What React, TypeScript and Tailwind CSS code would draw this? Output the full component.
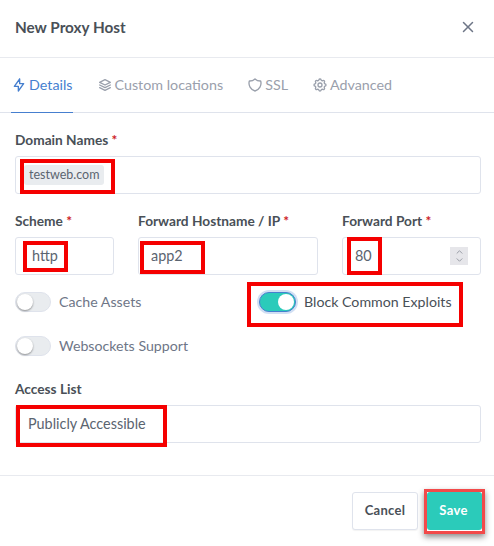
import { TbBolt, TbStack2, TbShield, TbSettings, TbX, TbChevronUp, TbChevronDown } from 'react-icons/tb'
import type { ReactNode } from 'react'

const redBox = 'absolute border-[4px] border-[#f50000] pointer-events-none'

function Label({ text, required }: { text: string; required?: boolean }) {
  return (
    <div className="h-[16px] mb-[8px] text-[13.7px] leading-[16px] font-bold text-[#495057]">
      {text}
      {required && <span className="text-[#cd201f]"> *</span>}
    </div>
  )
}

function Field({ children, className }: { children: ReactNode; className?: string }) {
  return (
    <div className={`relative h-[38px] border border-[#dfe3ec] rounded-[3px] bg-white flex items-center text-[14.4px] text-[#5b6470] ${className ?? ''}`}>
      {children}
    </div>
  )
}

function Toggle({ on, label }: { on?: boolean; label: string }) {
  return (
    <div className="flex items-center gap-[8px] h-[20px]">
      {on ? (
        <div className="w-[37px] h-[20px] rounded-full bg-[#2bcbba] border border-[#467fcf] shadow-[0_0_0_2px_rgba(70,127,207,0.25)] flex items-center justify-end pr-[1px]">
          <div className="w-[16px] h-[16px] rounded-full bg-white" />
        </div>
      ) : (
        <div className="w-[36px] h-[20px] rounded-full bg-[#e9ecef] border border-[#dfe3ec] flex items-center pl-[1px]">
          <div className="w-[16px] h-[16px] rounded-full bg-white shadow-[0_1px_2px_rgba(0,0,0,0.4)]" />
        </div>
      )}
      <span className={`text-[14.2px] leading-[20px] ${on ? 'text-[#495057]' : 'text-[#6e7687]'}`}>{label}</span>
    </div>
  )
}

function Tab({ icon, label, active }: { icon: ReactNode; label: string; active?: boolean }) {
  return (
    <div className={`h-[55px] -mb-px pb-[1px] flex items-center gap-[2px] border-b text-[14.3px] ${active ? 'text-[#467fcf] border-[#467fcf]' : 'text-[#9aa0ac] border-transparent'}`}>
      {icon}
      <span>{label}</span>
    </div>
  )
}

export default function App() {
  return (
    <div className="min-h-screen w-[494px] bg-white font-['Lato','Noto_Sans',sans-serif] overflow-hidden">
      {/* header */}
      <div className="h-[58px] border-b border-[#e8eaef] pl-[15px] pr-[17px] pb-[3px] flex items-center justify-between">
        <h1 className="text-[15.3px] font-bold text-[#495057]">New Proxy Host</h1>
        <TbX size={18} className="text-[#6e7687]" />
      </div>

      {/* tabs */}
      <div className="h-[55px] border-b border-[#dfe3ec] pl-[11px] flex gap-[24px]">
        <Tab active icon={<TbBolt size={16} />} label="Details" />
        <Tab icon={<TbStack2 size={16} />} label="Custom locations" />
        <Tab icon={<TbShield size={16} />} label="SSL" />
        <Tab icon={<TbSettings size={16} />} label="Advanced" />
      </div>

      <div className="pt-[19px] pl-[15px] pr-[13px]">
        <Label text="Domain Names" required />
        <Field className="pl-[8px]">
          <span className="h-[20px] px-[5px] rounded-[3px] bg-[#e9ecef] text-[12.5px] leading-[20px]">testweb.com</span>
          <div className={`${redBox} left-[4px] top-[2px] w-[95px] h-[35px]`} />
        </Field>

        <div className="mt-[19px] flex gap-[24px]">
          <div className="w-[99px]">
            <Label text="Scheme" required />
            <Field className="pl-[16px]">
              http
              <div className={`${redBox} left-[7px] top-[3px] w-[45px] h-[31px]`} />
            </Field>
          </div>
          <div className="w-[180px]">
            <Label text="Forward Hostname / IP" required />
            <Field className="pl-[12px]">
              app2
              <div className={`${redBox} left-[1px] top-[3px] w-[65px] h-[33px]`} />
            </Field>
          </div>
          <div className="w-[139px]">
            <Label text="Forward Port" required />
            <Field className="pl-[12px] pr-[12px] justify-between">
              80
              <div className="w-[18px] h-[18px] bg-[#e6e6ea] flex flex-col items-center justify-center text-[#8a8f99]">
                <TbChevronUp size={11} strokeWidth={2} className="-mb-[1px]" />
                <TbChevronDown size={11} strokeWidth={2} className="-mt-[1px]" />
              </div>
              <div className={`${redBox} left-[4px] -top-px w-[35px] h-[38px]`} />
            </Field>
          </div>
        </div>

        <div className="mt-[17px] grid grid-cols-[244px_1fr]">
          <Toggle label="Cache Assets" />
          <div className="relative">
            <Toggle on label="Block Common Exploits" />
            <div className={`${redBox} -left-[12px] -top-[10px] w-[216px] h-[45px]`} />
          </div>
        </div>
        <div className="mt-[24px]">
          <Toggle label="Websockets Support" />
        </div>

        <div className="mt-[25px]">
          <Label text="Access List" />
          <Field className="pl-[12px]">
            Publicly Accessible
            <div className={`${redBox} left-0 -top-px w-[151px] h-[42px]`} />
          </Field>
        </div>
      </div>

      {/* footer */}
      <div className="mt-[32px] border-t border-[#e8eaef] pt-[16px] pr-[12px] flex justify-end gap-[9px]">
        <button className="w-[66px] h-[38px] rounded-[3px] border border-[#dfe3ec] bg-white text-[13px] font-bold tracking-[0.3px] text-[#495057] shadow-[0_1px_1px_rgba(0,0,0,0.05)]">
          Cancel
        </button>
        <button className="relative w-[55px] h-[38px] pr-[2px] rounded-[3px] bg-[#2bcbba] text-[13px] font-bold tracking-[0.3px] text-white">
          Save
          <span className="absolute -left-[3px] -top-[3px] -right-[3px] -bottom-[4px] border-[3px] border-[#f24a4a] shadow-[0_3px_6px_rgba(0,0,0,0.45)] pointer-events-none" />
        </button>
      </div>
    </div>
  )
}
